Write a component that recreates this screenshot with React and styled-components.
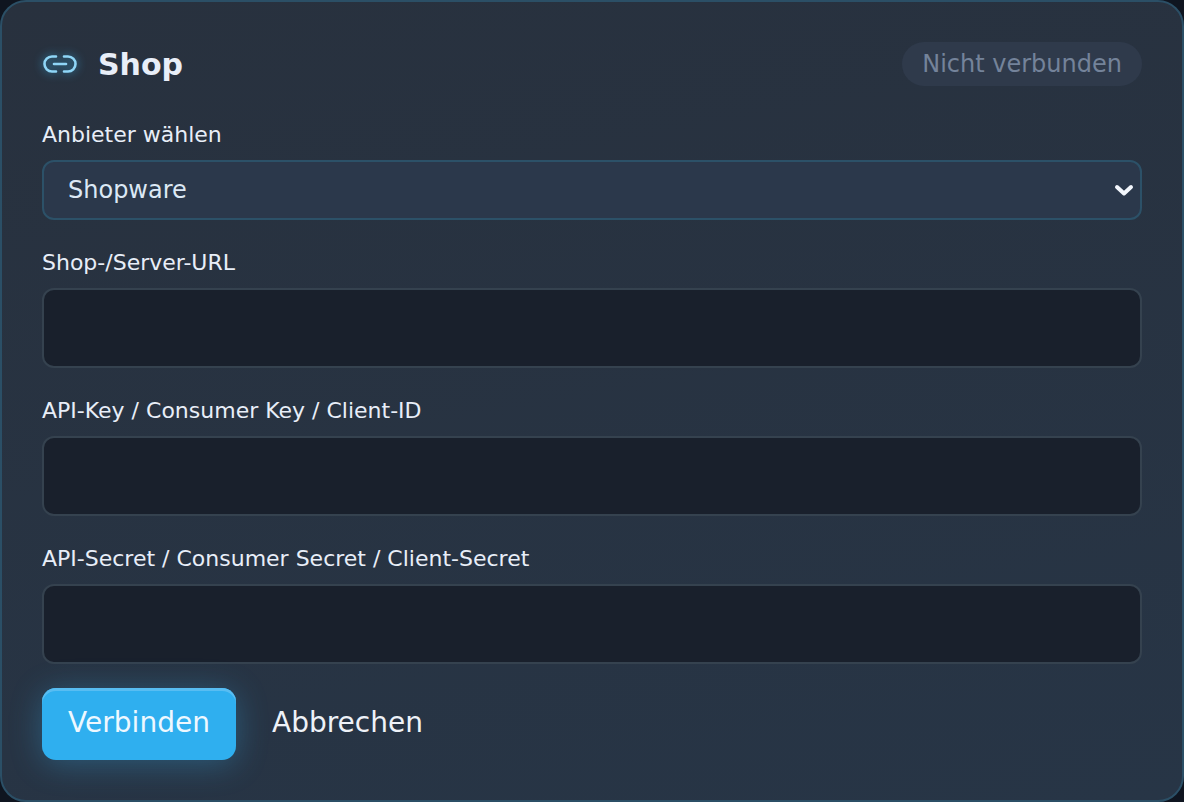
import React from "react";
import styled, { createGlobalStyle } from "styled-components";

const Global = createGlobalStyle`
  html, body { margin: 0; padding: 0; background: #0f1520; }
  body { font-family: "DejaVu Sans", sans-serif; }
  * { box-sizing: border-box; }
`;

const Card = styled.div`
  width: 1184px;
  height: 802px;
  padding: 40px 40px 0;
  border: 2px solid #2b4f66;
  border-radius: 26px;
  background: linear-gradient(170deg, #28313e 0%, #273546 100%);
  display: flex;
  flex-direction: column;
  overflow: hidden;
`;

const Header = styled.div`
  height: 44px;
  display: flex;
  align-items: center;
  justify-content: space-between;
`;

const Title = styled.div`
  display: flex;
  align-items: center;
  gap: 20px;
  font-size: 30px;
  font-weight: 700;
  color: #e8eef8;
`;

const LinkIcon = styled.svg`
  width: 36px;
  height: 36px;
  display: block;
  filter: drop-shadow(0 0 5px rgba(56, 189, 248, 0.75));
`;

const Badge = styled.div`
  height: 44px;
  padding: 0 20px;
  border-radius: 22px;
  background: #2f3a4b;
  color: #74839a;
  font-size: 24px;
  line-height: 44px;
  white-space: nowrap;
`;

const Field = styled.div`
  display: flex;
  flex-direction: column;
  margin-top: ${(p) => p.$top}px;
`;

const Label = styled.label`
  height: 28px;
  margin-bottom: 11px;
  font-size: 22px;
  line-height: 28px;
  color: #e8eef8;
  white-space: nowrap;
`;

const SelectBox = styled.div`
  height: 60px;
  padding: 0 5px 0 24px;
  border: 2px solid #2c5168;
  border-radius: 12px;
  background: #2b384b;
  display: flex;
  align-items: center;
  justify-content: space-between;
  color: #dce8f5;
  font-size: 24px;
`;

const Chevron = styled.svg`
  width: 22px;
  height: 22px;
  display: block;
`;

const TextInput = styled.input`
  width: 100%;
  height: 80px;
  border: 2px solid #35424f;
  border-radius: 12px;
  background: #19202c;
  outline: none;
`;

const Actions = styled.div`
  display: flex;
  align-items: center;
  gap: 36px;
  margin-top: 24px;
`;

const Primary = styled.button`
  width: 194px;
  height: 72px;
  border: 0;
  border-radius: 14px;
  background: #2fafef;
  box-shadow: inset 0 3px 0 #58bdf2, 0 4px 32px rgba(56, 176, 240, 0.32);
  color: #eef8ff;
  font: 400 28px "DejaVu Sans", sans-serif;
  padding: 0 0 4px;
`;

const Ghost = styled.button`
  border: 0;
  background: none;
  color: #eef2f8;
  font: 400 28px "DejaVu Sans", sans-serif;
  padding: 0 0 4px;
`;

export default function App() {
  return (
    <>
      <Global />
      <Card>
        <Header>
          <Title>
            <LinkIcon viewBox="0 0 36 36" fill="none" stroke="#8fd6f7" strokeWidth="2.6" strokeLinecap="round">
              <path d="M14 10.500H10a7.500 7.500 0 0 0 0 15h4" />
              <path d="M22 10.500h4a7.500 7.500 0 0 1 0 15h-4" />
              <path d="M12 18h12" />
            </LinkIcon>
            Shop
          </Title>
          <Badge>Nicht verbunden</Badge>
        </Header>
        <Field $top={35}>
          <Label>Anbieter wählen</Label>
          <SelectBox>
            Shopware
            <Chevron viewBox="0 0 22 22" fill="none" stroke="#f2f6fc" strokeWidth="4" strokeLinecap="round" strokeLinejoin="round">
              <path d="M4 8l7 6.500L18 8" />
            </Chevron>
          </SelectBox>
        </Field>
        <Field $top={29}>
          <Label>Shop-/Server-URL</Label>
          <TextInput />
        </Field>
        <Field $top={29}>
          <Label>API-Key / Consumer Key / Client-ID</Label>
          <TextInput />
        </Field>
        <Field $top={29}>
          <Label>API-Secret / Consumer Secret / Client-Secret</Label>
          <TextInput />
        </Field>
        <Actions>
          <Primary>Verbinden</Primary>
          <Ghost>Abbrechen</Ghost>
        </Actions>
      </Card>
    </>
  );
}
